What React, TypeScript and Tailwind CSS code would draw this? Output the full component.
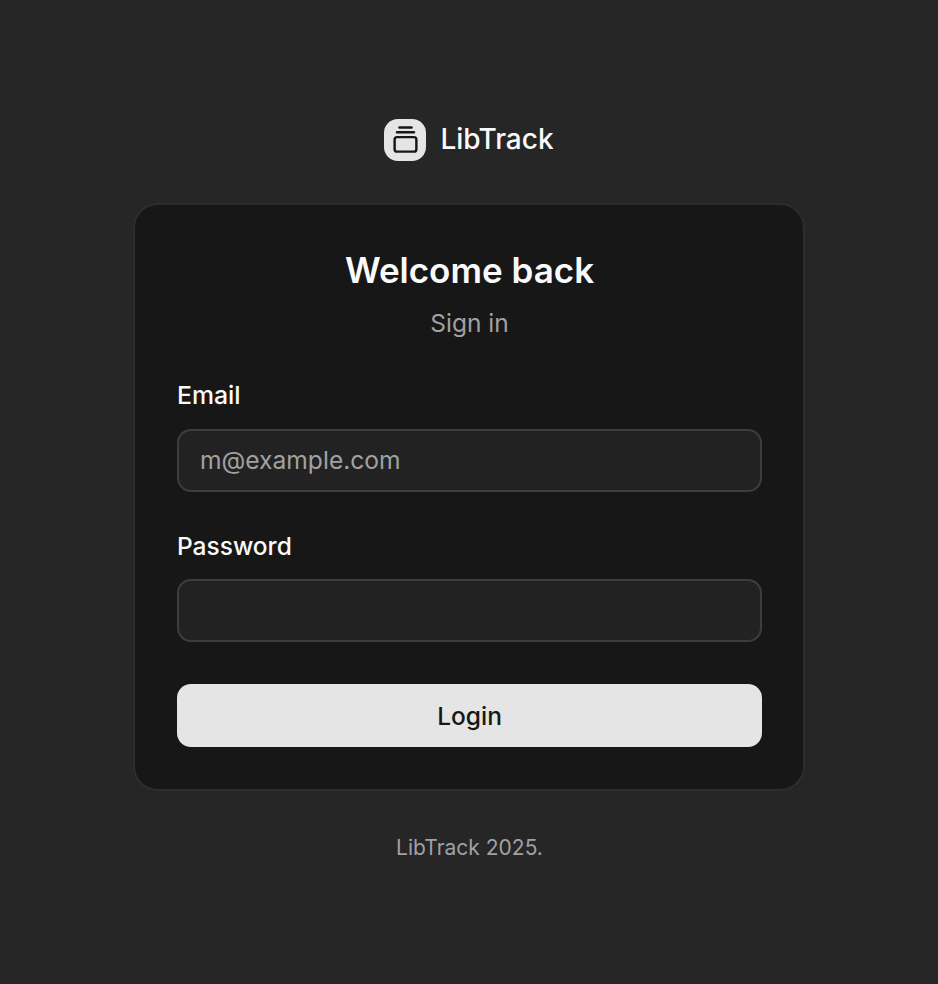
import { GalleryVerticalEnd } from "lucide-react";

export default function App() {
  return (
    <div className="flex h-[984px] w-full flex-col items-center border-b-3 border-[#2b2529] bg-[#262626] pt-[118px] font-['Inter',sans-serif] text-[#fafafa]">
      <div className="flex h-[43px] items-center gap-3.5 text-[28px] leading-[42px] font-medium">
        <div className="flex size-[42px] items-center justify-center rounded-[14px] bg-[#e5e5e5] pb-px text-[#171717]">
          <GalleryVerticalEnd size={29} />
        </div>
        <span className="-mt-px">LibTrack</span>
      </div>
      <main className="mt-[42px] flex h-[588px] w-[672px] flex-col rounded-[25px] border-2 border-[#2d2d2d] bg-[#171717] pr-[41px] pl-[42px] pt-[42px]">
        <h1 className="text-center text-[35px] leading-[46px] font-semibold">Welcome back</h1>
        <p className="mt-3 text-center text-[24.5px] leading-9 text-[#a1a1a1]">Sign in</p>
        <form className="mt-[42px] flex flex-col">
          <label className="text-[24.8px] leading-[25px] font-medium">Email</label>
          <input placeholder="m@example.com" className="mt-[21px] h-[63px] rounded-[14px] border-2 border-[#3d3d3d] bg-[#222] px-[21px] pb-px text-[24.6px] placeholder:text-[#a1a1a1]" />
          <label className="mt-[42px] text-[24.5px] leading-[25px] font-medium">Password</label>
          <input type="password" className="mt-[20px] h-[63px] rounded-[14px] border-2 border-[#3d3d3d] bg-[#222] px-[21px]" />
          <button type="button" className="mt-[42px] h-[63px] rounded-[14px] bg-[#e5e5e5] pt-px text-[24.5px] font-medium text-[#171717]">Login</button>
        </form>
      </main>
      <p className="mt-[42px] pl-px text-[21px] leading-[29px] text-[#a1a1a1]">LibTrack 2025.</p>
    </div>
  );
}
